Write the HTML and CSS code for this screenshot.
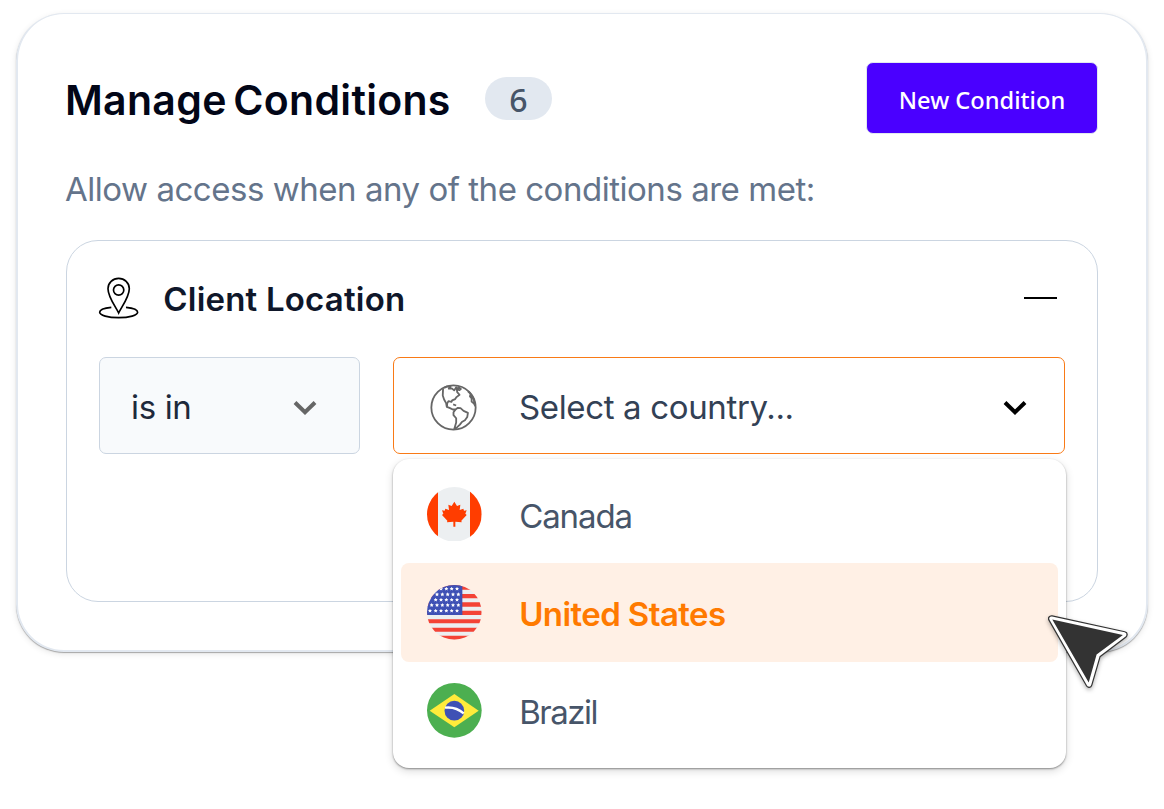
FILE: index.html
```html
<!DOCTYPE html>
<html lang="en">
<head>
<meta charset="utf-8">
<title>Manage Conditions</title>
<link rel="stylesheet" href="styles.css">
</head>
<body>
<main class="card">
  <header class="header">
    <h1 class="title">Manage Conditions</h1>
    <span class="count">6</span>
    <button class="new-button" type="button">New Condition</button>
  </header>
  <p class="intro">Allow access when any of the conditions are met:</p>
  <section class="condition">
    <div class="condition-head">
      <svg class="pin" viewBox="24 20 124 126" fill="none" stroke="#000" stroke-width="5">
        <path d="M86 128C78 111 54 80 54 55A32 31 0 0 1 118 55C118 80 94 111 86 128Z"/>
        <circle cx="86" cy="59" r="15.5"/>
        <path d="M64 111C43 113 29 119 29 126C29 135 54 142 86 142S143 135 143 126C143 119 129 113 108 111"/>
      </svg>
      <h2 class="condition-title">Client Location</h2>
      <span class="collapse"></span>
    </div>
    <div class="fields">
      <div class="operator">
        <span class="operator-text">is in</span>
        <svg class="chevron chevron-muted" viewBox="0 0 24 16"><path d="M2 2.5L12 12.2L22 2.5"/></svg>
      </div>
      <div class="country">
        <svg class="globe" viewBox="136 116 140 140" fill="none" stroke="#666" stroke-width="5.4" stroke-linejoin="round">
          <circle cx="206" cy="186" r="66"/>
          <path d="M175 129L174 150L178 162L184 173L186 184L194 187L204 192L213 191L219 187L227 188L236 196L249 202L247 214L240 224L231 229L225 237L210 251M213 191L206 200L206 209L214 218L214 231L208 251"/>
          <path d="M178 128L187 123L197 124L192 130L201 129L208 135L214 126L220 130L224 123M223 127L228 131L224 134L216 132L217 140L224 148L215 155L211 161L202 165L200 169L191 167L187 174L187 183M205 177L214 180"/>
          <path d="M249 138L257 145L255 153L260 159L260 168L267 174L271 182M258 147L265 158L271 179"/>
        </svg>
        <span class="country-text">Select a country...</span>
        <svg class="chevron" viewBox="0 0 24 16"><path d="M2 2.5L12 12.2L22 2.5"/></svg>
        <ul class="menu">
          <li class="option">
            <svg class="flag" viewBox="0 0 164 164">
              <clipPath id="round"><circle cx="82" cy="82" r="82"/></clipPath>
              <g clip-path="url(#round)">
                <path fill="#eceff1" d="M0 0H164V164H0Z"/>
                <path fill="#ff3d00" d="M0 0H33V164H0ZM129 0H164V164H129ZM82 44L90 57L100 53L98 69L109 65L111 71L119 70L115 80L119 84L103 101L104 106L85 104V119H79V104L60 106L61 101L45 84L49 80L45 70L53 71L55 65L66 69L64 53L74 57Z"/>
              </g>
            </svg>
            <span class="option-text canada">Canada</span>
          </li>
          <li class="option selected">
            <svg class="flag" viewBox="0 0 164 164">
              <defs><path id="star" fill="#fff" d="M0 -6L1.8 -2.2L6 -1.7L3 1.2L3.8 5.5L0 3.4L-3.8 5.5L-3 1.2L-6 -1.7L-1.8 -2.2Z"/></defs>
              <g clip-path="url(#round)">
                <path fill="#eceff1" d="M0 0H164V164H0Z"/>
                <path fill="#f44336" d="M0 0H164V14H0ZM0 27H164V40H0ZM0 52H164V65H0ZM0 77H164V90H0ZM0 103H164V115H0ZM0 128H164V140H0ZM0 152H164V164H0Z"/>
                <path fill="#3f51b5" d="M0 0H106V90H0Z"/>
                <use href="#star" x="42" y="11"/><use href="#star" x="58" y="11"/><use href="#star" x="74" y="11"/><use href="#star" x="90" y="11"/>
                <use href="#star" x="30" y="28"/><use href="#star" x="46" y="28"/><use href="#star" x="62" y="28"/><use href="#star" x="78" y="28"/><use href="#star" x="94" y="28"/>
                <use href="#star" x="26" y="44"/><use href="#star" x="42" y="44"/><use href="#star" x="58" y="44"/><use href="#star" x="74" y="44"/><use href="#star" x="90" y="44"/>
                <use href="#star" x="14" y="60"/><use href="#star" x="30" y="60"/><use href="#star" x="46" y="60"/><use href="#star" x="62" y="60"/><use href="#star" x="78" y="60"/><use href="#star" x="94" y="60"/>
                <use href="#star" x="9" y="77"/><use href="#star" x="26" y="77"/><use href="#star" x="42" y="77"/><use href="#star" x="58" y="77"/><use href="#star" x="74" y="77"/><use href="#star" x="90" y="77"/>
              </g>
            </svg>
            <span class="option-text states">United States</span>
          </li>
          <li class="option">
            <svg class="flag" viewBox="0 0 164 164">
              <circle cx="82" cy="82" r="82" fill="#4caf50"/>
              <path fill="#ffeb3b" d="M82 33L155 83L82 133L8 83Z"/>
              <circle cx="82" cy="83" r="29.5" fill="#3f51b5"/>
              <path d="M54 74Q86 70 110 91" fill="none" stroke="#fff" stroke-width="7"/>
            </svg>
            <span class="option-text brazil">Brazil</span>
          </li>
        </ul>
      </div>
    </div>
  </section>
</main>
<svg class="cursor" viewBox="0 0 92 86">
  <g stroke-linejoin="round">
    <path fill="#333" stroke="#333" stroke-width="7" d="M11.5 10.7L84.2 26.6L57.5 47L49 76.3Z"/>
    <path fill="#333" stroke="#fff" stroke-width="4.6" d="M11.5 10.7L84.2 26.6L57.5 47L49 76.3Z"/>
    <path fill="#333" d="M12.3 11.6L82.9 27L56.6 46.5L48.7 74.6Z"/>
  </g>
</svg>
</body>
</html>
```
FILE: styles.css
```css
* { box-sizing: border-box; }

body {
  margin: 0;
  padding: 13px 16px;
  height: 809px;
  overflow: hidden;
  background: #fff;
  font-family: Inter, "Open Sans", sans-serif;
}

.card {
  width: 1132px;
  height: 639px;
  padding: 47px 48px 0;
  border: 2px solid #e2e8f0;
  border-top-width: 1px;
  border-radius: 48px;
  background: #fff;
  box-shadow: 0 1px 1px rgba(0, 0, 0, .3), 0 2px 6px rgba(0, 0, 0, .1);
}

.header {
  display: flex;
  align-items: center;
  height: 74px;
}

.title {
  margin: 4px 0 0 -1px;
  width: 420px;
  color: #020617;
  font-size: 41px;
  font-weight: 600;
  line-height: 50px;
  letter-spacing: .3px;
  word-spacing: -4px;
  white-space: nowrap;
}

.count {
  width: 67px;
  height: 43px;
  border-radius: 22px;
  background: #e2e8f0;
  color: #475569;
  font: 500 32px/46px "Noto Sans", sans-serif;
  text-align: center;
}

.new-button {
  width: 232px;
  height: 72px;
  margin-left: auto;
  padding: 4px 0 0;
  border: 1px solid #e2e8f0;
  border-radius: 7px;
  background: #4a00ff;
  color: #fff;
  font: 500 23.6px "Noto Sans", sans-serif;
  white-space: nowrap;
}

.intro {
  margin: 34px 0 0 -1px;
  color: #64748b;
  font-size: 33px;
  line-height: 40px;
  letter-spacing: -.47px;
  white-space: nowrap;
}

.condition {
  width: 1032px;
  height: 362px;
  margin-top: 31px;
  padding: 32px;
  border: 1px solid #cbd5e1;
  border-radius: 32px;
}

.condition-head {
  display: flex;
  align-items: center;
  height: 50px;
}

.pin { width: 41.3px; height: 42px; margin-left: -1px; }

.condition-title {
  margin: 1px 0 0 24px;
  color: #0f172a;
  font-size: 33px;
  font-weight: 600;
  line-height: 40px;
  letter-spacing: .2px;
  white-space: nowrap;
}

.collapse {
  width: 33px;
  height: 2px;
  margin: 0 8px 0 auto;
  background: #000;
}

.fields {
  display: flex;
  gap: 33px;
  margin-top: 34px;
}

.operator,
.country {
  display: flex;
  align-items: center;
  height: 97px;
  border: 1px solid #cbd5e1;
  border-radius: 7px;
  font-size: 33px;
  letter-spacing: -.35px;
  white-space: nowrap;
}

.operator {
  width: 261px;
  padding: 0 42px 0 31px;
  justify-content: space-between;
  background: #f8fafc;
  color: #1e293b;
}

.operator-text,
.country-text { padding-top: 3px; }

.country {
  position: relative;
  width: 672px;
  padding: 0 37px 0 36px;
  border-color: #f97a16;
  color: #334155;
}

.globe { width: 47px; height: 47px; margin-top: 3px; }
.country-text { margin-left: 42px; }

.chevron {
  width: 24px;
  height: 16px;
  margin-top: 4px;
  fill: none;
  stroke: #000;
  stroke-width: 4;
}
.chevron-muted { stroke: #666; }
.country .chevron { margin-left: auto; }

.menu {
  position: absolute;
  top: 101px;
  left: -1px;
  z-index: 1;
  width: 673px;
  height: 309px;
  margin: 0;
  padding: 6px 8px 8px;
  border-radius: 16px;
  background: #fff;
  box-shadow: 0 1px 2px rgba(0, 0, 0, .4), 0 3px 8px rgba(0, 0, 0, .15);
  list-style: none;
}

.option {
  display: flex;
  align-items: center;
  gap: 37.5px;
  height: 98.3px;
  padding-left: 26px;
  border-radius: 8px;
  color: #475569;
}

.flag { width: 54.7px; height: 54.7px; }
.option-text { padding-top: 3px; }
.canada { letter-spacing: -1.1px; }
.states { letter-spacing: -.6px; }
.brazil { letter-spacing: -1.5px; }

.selected {
  background: #fff0e5;
  color: #ff7a00;
  font-weight: 600;
}

.cursor {
  position: absolute;
  top: 608px;
  left: 1040px;
  z-index: 2;
  width: 92px;
  height: 86px;
  filter: drop-shadow(0 2px 2px rgba(0, 0, 0, .3));
}
```
